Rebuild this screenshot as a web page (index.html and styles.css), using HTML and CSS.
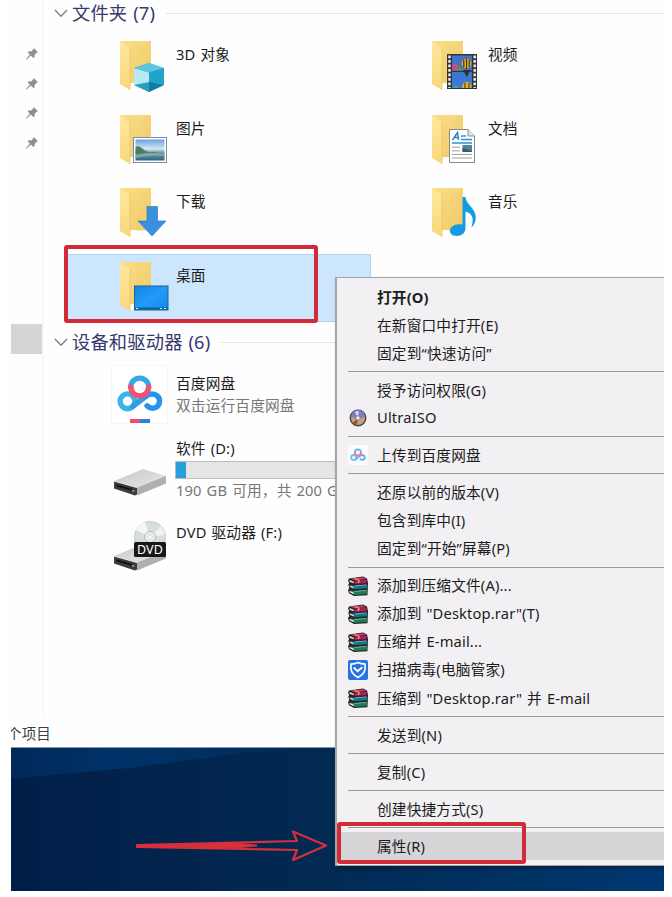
FILE: index.html
```
<!DOCTYPE html>
<html lang="zh-CN">
<head>
<meta charset="utf-8">
<title>此电脑</title>
<link rel="stylesheet" href="styles.css">
</head>
<body>
<svg class="defs" width="0" height="0" aria-hidden="true">
  <defs>
    <linearGradient id="gBack" x1="0" y1="0" x2="1" y2="1"><stop offset="0" stop-color="#fbdf86"/><stop offset="1" stop-color="#eec868"/></linearGradient>
    <linearGradient id="gFlap" x1="0" y1="0" x2="0" y2="1"><stop offset="0" stop-color="#ffe7a0"/><stop offset="1" stop-color="#f8d878"/></linearGradient>
    <linearGradient id="gSky" x1="0" y1="0" x2="0" y2="1"><stop offset="0" stop-color="#6a9fe0"/><stop offset=".45" stop-color="#d5e8f5"/><stop offset=".6" stop-color="#7f9fae"/><stop offset="1" stop-color="#2f6280"/></linearGradient>
    <linearGradient id="gScreen" x1="0" y1="0" x2="1" y2="1"><stop offset="0" stop-color="#0c85e8"/><stop offset=".5" stop-color="#249bf5"/><stop offset="1" stop-color="#0a8cf0"/></linearGradient>
    <linearGradient id="gDrive" x1="0" y1="0" x2="1" y2="1"><stop offset="0" stop-color="#c9c9c9"/><stop offset="1" stop-color="#e6e6e6"/></linearGradient>
    <symbol id="folder" viewBox="0 0 56 60">
      <path d="M4 4H35V46L14 47Z" fill="url(#gBack)"/>
      <path d="M12 46H21V52H12Z" fill="#fff" opacity=".9"/>
      <path d="M4 4L14 11V53L4 47Z" fill="url(#gFlap)"/>
      <path d="M14 11V53" stroke="#e9c569" stroke-width=".8"/>
    </symbol>
    <symbol id="pin" viewBox="0 0 14 14">
      <path d="M8.7 1L13 5.2L11.6 5.7L9.6 8L9.6 10.2L8.4 11L5.8 8.5L1.4 12.7L.9 12.2L4.8 7.6L2.7 5.4L3.6 4.3L6 4.4L8.2 2.4Z" fill="#8b9097"/>
    </symbol>
    <symbol id="rar" viewBox="0 0 20 20">
      <path d="M1 2.5L15 .6L19 2.4L20 7L19.5 19.2L6 20L1 17.2L0 14.3L1.2 12L.3 8.6L1.2 7L0 4.5Z" fill="#2a2226"/>
      <path d="M2 2.7L14.5 1.2L18.5 2.9L6.5 4.6Z" fill="#c03a6c"/>
      <path d="M6.5 5.2L18.5 3.6V7L6.5 8Z" fill="#b31d60"/>
      <path d="M1.6 4L5.7 5.8V7.3L1.6 5.7Z" fill="#e9e4e6"/>
      <path d="M2.4 8.4L6.5 9.9L19 8.7V12.3L6.5 13.3Z" fill="#16728f"/>
      <path d="M6.5 9.6L18.5 8.4V9.3L6.5 10.5Z" fill="#71c1d2"/>
      <path d="M1.7 9.4L5.7 11V12.4L1.7 10.8Z" fill="#e8e8e8"/>
      <path d="M2.4 13.7L6.5 15.3L19 14.1V17.9L6.5 19Z" fill="#188052"/>
      <path d="M6.5 15L18.5 13.9V14.8L6.5 15.9Z" fill="#6bc49a"/>
      <path d="M1.6 14.8L5.7 16.6V18.2L1.6 16.2Z" fill="#e8e8e8"/>
      <path d="M5.5 2.6L8 2.3L11.5 3.7V6.4L9.8 7V4.2Z" fill="#e0b04a"/>
    </symbol>
    <symbol id="drive" viewBox="0 0 52 32">
      <path d="M0 16.5L23 23V29.5L21 30.6L0 23.5Z" fill="#3b3d3b"/>
      <path d="M0 16L29 4L52 11L23 22.5Z" fill="url(#gDrive)"/>
      <path d="M23 22.5L52 11V18.5L23 30.5Z" fill="#aeafaf"/>
      <path d="M2.5 19.5L19 24.3V26L2.5 21.6Z" fill="#111"/>
      <path d="M18 24.8L20.3 25.5V27L18 26.3Z" fill="#74c77c"/>
    </symbol>
    <symbol id="pan" viewBox="0 0 46 38">
      <g fill="none" stroke-width="5.4" stroke-linecap="round">
        <circle cx="10.5" cy="26.3" r="7.4" stroke="#38b6ec"/>
        <path d="M15.6 31.6L28.5 21.5" stroke="#2f9dea"/>
        <path d="M28.5 21.5C34 16.5 43 19.5 42.5 26.7C42 33 34.5 35.2 30 30.8" stroke="#2893ee"/>
        <path d="M13.8 12A8.9 8.9 0 1 1 31.6 12" stroke="#34a9ea"/>
        <path d="M13.8 12A8.9 8.9 0 0 0 31.6 12" stroke="#ee5270"/>
      </g>
    </symbol>
  </defs>
</svg>

<div class="screen">
  <div class="explorer">
    <aside class="nav">
      <div class="pins">
        <svg class="pin"><use href="#pin"/></svg>
        <svg class="pin"><use href="#pin"/></svg>
        <svg class="pin"><use href="#pin"/></svg>
        <svg class="pin"><use href="#pin"/></svg>
      </div>
      <div class="nav-current"></div>
    </aside>
    <main class="content">
      <section>
        <h2 class="group first">
          <svg class="chevron" viewBox="0 0 14 9"><path d="M1 1L7 7.2L13 1" fill="none" stroke="#7b7f86" stroke-width="1.3"/></svg>
          <span class="group-title">文件夹 (7)</span>
        </h2>
        <div class="folders">
          <div class="tile">
            <svg class="icon" viewBox="0 0 56 60"><use href="#folder"/>
              <path d="M18 31L33 26L48 31V48L33 55L18 48Z" fill="#2fb0cf"/>
              <path d="M18 31L33 35.5V55L18 48Z" fill="#b7eaf2"/>
              <path d="M18 31L33 26L48 31L33 35.5Z" fill="#5bc6dc"/>
              <path d="M33 35.5L48 31V48L33 46Z" fill="#20a4cc"/>
              <path d="M18 48L33 45V55Z" fill="#2b9eb9"/><path d="M33 45L48 48L33 55Z" fill="#0e7f9f"/>
            </svg><span class="name">3D 对象</span></div>
          <div class="tile">
            <svg class="icon" viewBox="0 0 56 60"><use href="#folder"/>
              <rect x="19" y="17" width="30" height="35" fill="#34343a"/>
              <rect x="24" y="18.5" width="20" height="15" fill="#4472c9"/><rect x="24" y="35" width="20" height="16" fill="#3a78d8"/>
              <path d="M24 28Q27 25 30 28L34 33.5H24Z" fill="#bd5387"/><path d="M31 30L37 33.5H27Z" fill="#4e9f49"/>
              <circle cx="38.5" cy="26.5" r="4.8" fill="#e7b71e"/><path d="M38.5 21.5V32M35.8 23V30M41.2 23V30" stroke="#3c3214" stroke-width="1.2"/>
              <path d="M35 33L39 40L42 33Z" fill="#31301e"/><path d="M34 51Q34 45 39 45T43.5 51Z" fill="#dfb321"/><path d="M37 46V51M41 46V51" stroke="#3c3214"/>
              <path d="M25 51Q27 46 31 51Z" fill="#42a9a0"/>
              <path d="M21.5 18.5V51M46.7 18.5V51" stroke="#f2f2f2" stroke-width="2.4" stroke-dasharray="2.8 1.7"/>
            </svg><span class="name">视频</span></div>
          <div class="tile">
            <svg class="icon" viewBox="0 0 56 60"><use href="#folder"/>
              <rect x="17.5" y="26.5" width="33" height="25" fill="#fff" stroke="#7090a8"/>
              <rect x="19.5" y="28.5" width="29" height="21" fill="url(#gSky)"/>
              <path d="M19.5 36Q23 34 27 38T38 41L48.5 43H19.5Z" fill="#4f7a5c"/><path d="M19.5 44Q32 40 48.5 43V45Q32 44 19.5 47Z" fill="#78a8a8"/>
            </svg><span class="name">图片</span></div>
          <div class="tile">
            <svg class="icon" viewBox="0 0 56 60"><use href="#folder"/>
              <path d="M21.5 18.5H40L46.5 25V51.5H21.5Z" fill="#fff" stroke="#858a8e"/>
              <path d="M40 18.5V25H46.5" fill="#e7e9eb" stroke="#858a8e"/>
              <path d="M24.5 29L29.5 21.5L30.5 29M26.5 26.4H30.5" fill="none" stroke="#2487c5" stroke-width="1.5"/>
              <path d="M33 25H38M33 28.5H44M24 32H44" stroke="#2f91cd" stroke-width="1.3"/>
              <path d="M24 36.2H32M24 39.8H32M24 43.4H44M24 47H44" stroke="#989ea3"/>
              <rect x="34.5" y="34" width="9.5" height="7" fill="#4b86ab"/><path d="M34.5 37L44 40V41H34.5Z" fill="#35634c"/>
            </svg><span class="name">文档</span></div>
          <div class="tile">
            <svg class="icon" viewBox="0 0 56 60"><use href="#folder"/>
              <path d="M31 22.5H41.5V37H50L36 52L22 37H31Z" fill="#3990dc" stroke="#2c7fca" stroke-width=".7"/>
            </svg><span class="name">下载</span></div>
          <div class="tile">
            <svg class="icon" viewBox="0 0 56 60"><use href="#folder"/>
              <path d="M34.5 13H37.5C38 21 48 24 47.8 34Q47.6 40 43.3 43.5C47 33 43 29 37.5 27.5V44C37.5 49 33.5 52 28.5 52C24.5 52 22 50 22 46.8C22 42.5 28 39 34.5 40.8Z" fill="#149be4"/>
            </svg><span class="name">音乐</span></div>
          <div class="tile selected">
            <svg class="icon" viewBox="0 0 56 60"><use href="#folder"/>
              <rect x="18.5" y="28" width="33.5" height="24" fill="url(#gScreen)" stroke="#22618f"/>
              <path d="M19 50.5H51.5" stroke="#155c94" stroke-width="1.8"/><path d="M20 50.5H22M44 50.5H46M48 50.5H50" stroke="#d6edff" stroke-width="1.2"/>
            </svg><span class="name">桌面</span></div>
        </div>
      </section>
      <section>
        <h2 class="group second">
          <svg class="chevron" viewBox="0 0 14 9"><path d="M1 1L7 7.2L13 1" fill="none" stroke="#7b7f86" stroke-width="1.3"/></svg>
          <span class="group-title">设备和驱动器 (6)</span>
        </h2>
        <div class="drives">
          <div class="drive baidu">
            <div class="app-card"><svg class="pan-icon"><use href="#pan"/></svg><i class="app-bar"></i></div>
            <div class="drive-text"><span>百度网盘</span><span class="muted">双击运行百度网盘</span></div>
          </div>
          <div class="drive disk">
            <svg class="disk-icon"><use href="#drive"/></svg>
            <div class="drive-text"><span>软件 (D:)</span><div class="meter"><i class="used"></i></div><span class="muted capacity">190 GB 可用，共 200 GB</span></div>
          </div>
          <div class="drive dvd">
            <svg class="dvd-icon" viewBox="0 0 52 50">
              <svg y="19" width="52" height="32"><use href="#drive"/></svg>
              <circle cx="36" cy="16" r="15.7" fill="#d8dddd" stroke="#bcc3c3" stroke-width=".7"/>
              <path d="M36 16L22 9A15.5 15.5 0 0 1 31 1Z" fill="#f4f8f8"/><path d="M36 16L51 14A15.5 15.5 0 0 0 47 5Z" fill="#edf3f1"/>
              <circle cx="36" cy="16" r="5.5" fill="#edf0f0" stroke="#b5bcbc"/><circle cx="36" cy="16" r="2.3" fill="#fff" stroke="#b5bcbc" stroke-width=".6"/>
              <rect x="20" y="21" width="32" height="15" rx="1.5" fill="#181818"/>
              <text class="dvd-label" x="36" y="32.8" text-anchor="middle">DVD</text>
            </svg>
            <div class="drive-text"><span>DVD 驱动器 (F:)</span></div>
          </div>
        </div>
      </section>
    </main>
    <footer class="status">个项目</footer>
  </div>

  <div class="desktop">
    <svg class="wallpaper" viewBox="0 0 653 144" preserveAspectRatio="none">
      <defs>
        <linearGradient id="wall" x1="0" y1="0" x2="1" y2="0"><stop offset="0" stop-color="#011e47"/><stop offset=".48" stop-color="#022a53"/><stop offset="1" stop-color="#003872"/></linearGradient>
        <linearGradient id="ray" x1="0" y1="0" x2="1" y2="0"><stop offset="0" stop-color="#01285a"/><stop offset=".35" stop-color="#003369"/><stop offset="1" stop-color="#022a53"/></linearGradient>
      </defs>
      <rect width="653" height="144" fill="url(#wall)"/>
      <path d="M0 0H324L240 4L120 20L0 31Z" fill="url(#ray)"/>
    </svg>
  </div>

  <div class="menu">
    <div class="item default">打开(O)</div>
    <div class="item">在新窗口中打开(E)</div>
    <div class="item">固定到“快速访问”</div>
    <div class="sep"></div>
    <div class="item">授予访问权限(G)</div>
    <div class="item"><svg class="mi iso" viewBox="0 0 18 18"><circle cx="9" cy="9" r="7.7" fill="#c9a27b" stroke="#444047" stroke-width="1.4"/><path d="M2 8A7 7 0 0 1 16 8L9 10Z" fill="#827fc6"/><path d="M9 9L6 2.5L9.7 2Z" fill="#dfe1f6"/><path d="M9 9L3.5 14L8 16Z" fill="#895a36"/><circle cx="9" cy="9" r="2.2" fill="#f2eeee" stroke="#6e6684" stroke-width=".8"/></svg>UltraISO</div>
    <div class="sep"></div>
    <div class="item"><span class="mi pan-badge"><svg class="pan-small"><use href="#pan"/></svg></span>上传到百度网盘</div>
    <div class="sep"></div>
    <div class="item">还原以前的版本(V)</div>
    <div class="item">包含到库中(I)</div>
    <div class="item">固定到“开始”屏幕(P)</div>
    <div class="sep"></div>
    <div class="item"><svg class="mi"><use href="#rar"/></svg>添加到压缩文件(A)...</div>
    <div class="item"><svg class="mi"><use href="#rar"/></svg>添加到 "Desktop.rar"(T)</div>
    <div class="item"><svg class="mi"><use href="#rar"/></svg>压缩并 E-mail...</div>
    <div class="item"><svg class="mi" viewBox="0 0 20 20"><rect width="20" height="20" rx="2" fill="#2573e5"/><path d="M10 2.6Q13 4 17 4.2V9Q16.5 14 10 17.5Q3.5 14 3 9V4.2Q7 4 10 2.6Z" fill="none" stroke="#fff" stroke-width="1.7"/><path d="M5.7 7.5L9.6 11.2L14.3 7.3" fill="none" stroke="#fff" stroke-width="1.8"/></svg>扫描病毒(电脑管家)</div>
    <div class="item"><svg class="mi"><use href="#rar"/></svg>压缩到 "Desktop.rar" 并 E-mail</div>
    <div class="sep"></div>
    <div class="item">发送到(N)</div>
    <div class="sep"></div>
    <div class="item">复制(C)</div>
    <div class="sep"></div>
    <div class="item">创建快捷方式(S)</div>
    <div class="sep"></div>
    <div class="item hover">属性(R)</div>
  </div>

  <div class="mark mark-folder"></div>
  <div class="mark mark-props"></div>
  <svg class="arrow" viewBox="0 0 194 34">
    <path d="M2 16L162 12L158 2.5L191 16.5L158 31L162 21L2 18Z" fill="none" stroke="#d5303b" stroke-width="2.2" stroke-linejoin="round"/>
    <path d="M2 16L100 13.8L122 15.5V17.5L100 19.6L2 18Z" fill="#d5303b"/>
  </svg>
</div>
</body>
</html>
```
FILE: styles.css
```
* { box-sizing: border-box; }

body {
  margin: 0;
  background: #fff;
  font-family: "Noto Sans", "Noto Sans CJK SC", sans-serif;
  font-size: 14.7px;
  letter-spacing: .15px;
  word-spacing: 1px;
  color: #1c1c1c;
}

.defs { position: absolute; }

.screen {
  position: relative;
  width: 653px;
  height: 891px;
  margin-left: 11px;
  overflow: hidden;
}

.explorer {
  display: grid;
  grid-template-columns: 33px 1fr;
  grid-template-rows: 717px 30px;
  height: 747px;
  background: #fefefe;
}

.nav { border-right: 2px solid #f7f8fd; }

.pins {
  display: flex;
  flex-direction: column;
  align-items: flex-end;
  gap: 15.5px;
  height: 276px;
  padding: 47px 3px 0 0;
  margin-bottom: 48px;
}

.pin { width: 14px; height: 14px; flex: none; }

.nav-current { width: 31px; height: 30px; background: #d5d5d5; }

.content { min-width: 0; }

.group {
  display: flex;
  align-items: center;
  height: 27px;
  margin: 0;
  padding-left: 10px;
  font-size: 18.3px;
  font-weight: 400;
  color: #37386f;
  white-space: nowrap;
}

.group-title { margin-top: -3px; }

.group::after { content: ""; flex: 1; height: 1px; margin-left: 11px; background: #e4e4e4; }

.chevron { width: 14px; height: 9px; margin-right: 4px; }

.folders {
  display: grid;
  grid-template-columns: 306px 306px;
  grid-auto-rows: 68.5px;
  gap: 5px 6px;
  padding: 6px 0 0 21px;
}

.tile { display: flex; align-items: flex-start; padding-left: 51px; }

.selected { background: #cce6fd; border: 1px solid #b2d5ed; padding-left: 50px; }

.icon { width: 56px; height: 60px; margin: 4px 4px 0 0; flex: none; }

.name { margin-top: 11px; line-height: 20px; }

.selected .icon { margin-top: 3px; }

.selected .name { margin-top: 10px; }

.second { margin-top: 6.5px; }

.drives { padding: 9px 0 0 67px; }

.drive { display: flex; white-space: nowrap; }

.drive-text { display: flex; flex-direction: column; line-height: 22px; flex: 1; }

.muted { color: #777; }

.baidu { height: 72px; }

.app-card {
  display: flex;
  flex-direction: column;
  align-items: center;
  justify-content: space-between;
  width: 57px;
  height: 59px;
  margin-right: 8px;
  padding-top: 9px;
  border: 1px solid #f6f6f6;
  background: #fff;
}

.baidu .drive-text { padding-top: 7px; }

.pan-icon { width: 46px; height: 38px; }

.app-bar { width: 20px; height: 4px; background: linear-gradient(90deg, #ec506e 48%, #347fd0 52%); }

.disk { height: 84px; padding-left: 3px; }

.disk-icon { width: 52px; height: 32px; margin: 28px 10px 0 0; }

.meter { height: 18px; margin: 2px 0 0 -1px; border: 1px solid #bcbcbc; background: #e6e6e6; }

.used { display: block; width: 10px; height: 16px; background: #26a0da; }

.capacity { margin-top: 0; }

.dvd { padding-left: 3px; }

.dvd-icon { width: 52px; height: 50px; margin-right: 10px; }

.dvd-label { fill: #fff; font-size: 12.5px; }

.status {
  grid-column: 1 / -1;
  margin-left: -4px;
  padding-top: 5px;
  line-height: 22px;
  font-size: 14.5px;
  color: #3b3f4a;
}

.desktop { height: 144px; border-top: 1px solid #8296ac; }

.wallpaper { display: block; width: 100%; height: 100%; }

.menu {
  position: absolute;
  left: 324px;
  top: 277px;
  width: 340px;
  height: 589px;
  padding-top: 5px;
  border: 1px solid #a5a5a8;
  border-left-width: 2px;
  background: #f2f0f3;
  box-shadow: 2px 3px 4px rgba(0, 0, 0, .3);
}

.item {
  display: flex;
  align-items: center;
  height: 28.12px;
  padding: 0 0 2px 40px;
  white-space: pre;
}

.default { font-weight: 700; }

.hover { background: #d7d5d7; }

.mi { position: relative; top: 1px; width: 20px; height: 20px; margin: 0 9px 0 -29px; flex: none; }

.iso { width: 18px; height: 18px; margin: 0 10px 0 -28px; }

.pan-badge { display: flex; align-items: center; justify-content: center; background: #fbfbfd; }

.pan-small { width: 16px; height: 14px; opacity: .75; }

.sep { height: 8.9px; padding-top: 4px; margin-left: 11px; }

.sep::before { content: ""; display: block; height: 1px; background: #9b9a9c; }

.mark { position: absolute; border: 4px solid #d12a38; border-radius: 3px; }

.mark-folder { left: 53px; top: 245px; width: 254px; height: 78px; }

.mark-props { left: 326px; top: 822px; width: 189px; height: 42px; }

.arrow { position: absolute; left: 124px; top: 829px; width: 194px; height: 34px; }
```
